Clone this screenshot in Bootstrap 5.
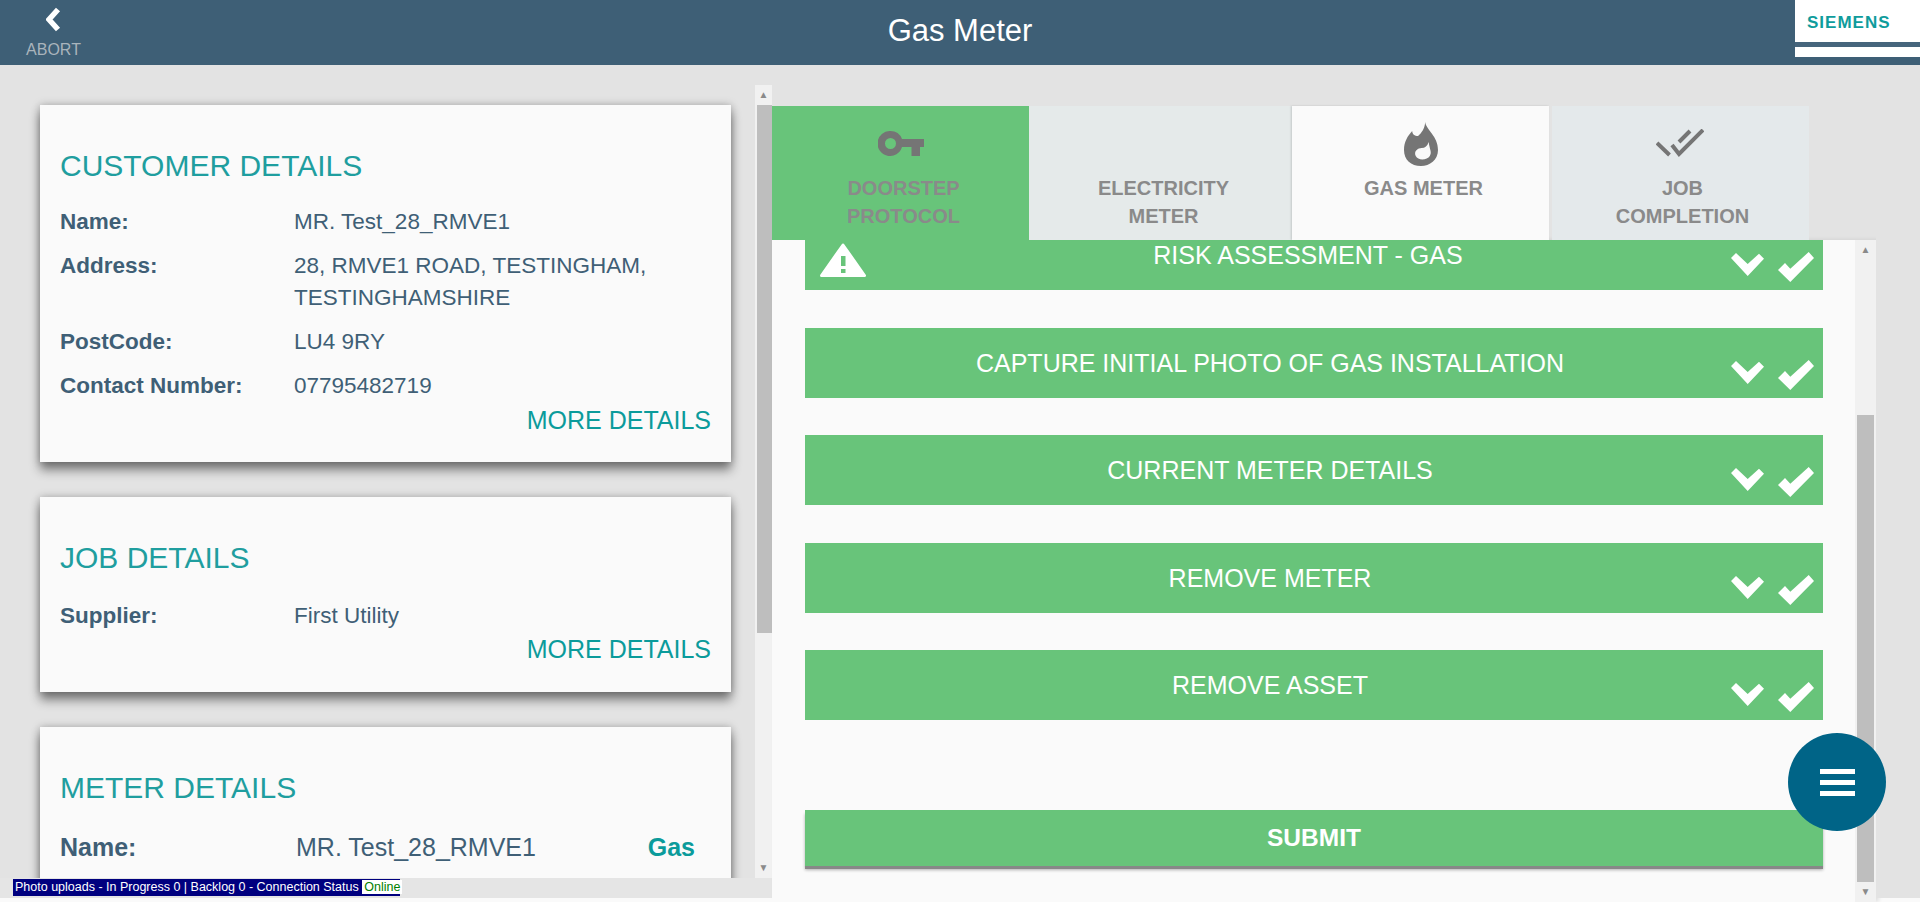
<!DOCTYPE html>
<html lang="en">
<head>
  <meta charset="UTF-8">
  <title>Gas Meter</title>
  <link rel="stylesheet" href="https://cdn.jsdelivr.net/npm/bootstrap@5.3.0/dist/css/bootstrap.min.css">
  <style>
    html, body { height: 902px; overflow: hidden; }
    body { background: #fafafa; font-family: "Liberation Sans", Arial, sans-serif; color: #3f5f76; position: relative; }
    .top-bar { height: 65px; background: #3e5f76; color: #fff; }
    .abort-btn { width: 125px; padding: 7px 18px 0 0; color: #a9b4bc; font-size: 16px; line-height: 18px; }
    .abort-btn span { display: block; margin-top: 9px; }
    .page-title { font-size: 31px; line-height: 62px; }
    .logo-box { width: 125px; height: 57px; background: #fff; }
    .logo-text { height: 42px; padding: 14px 0 0 12px; color: #0f9c9c; font-size: 17px; line-height: 18px; font-weight: 700; letter-spacing: 1px; }
    .logo-band { height: 5px; background: #46657c; }
    .left-col { width: 772px; }
    .left-main { height: 813px; background: #e3e3e3; }
    .cards-wrap { width: 755px; height: 813px; padding: 40px 24px 0 40px; overflow: hidden; }
    .info-card { border-radius: 0; background: #fafafa; box-shadow: 0 8px 10px rgba(0,0,0,.45), 0 0 8px rgba(0,0,0,.25); padding: 0 20px; margin-bottom: 35px; }
    .info-card h4 { color: #1f9e9f; font-size: 30px; line-height: 36px; font-weight: 400; margin: 43px 0 22px; }
    .info-row { display: flex; font-size: 22.5px; line-height: 32px; margin-bottom: 12px; }
    .info-row b { width: 234px; flex: none; }
    .more-link { color: #0b9b9b; font-size: 25px; line-height: 32px; text-align: right; margin-top: -10px; }
    .card-customer { height: 357px; }
    .card-job { height: 195px; }
    .card-job h4 { margin-bottom: 24px; }
    .card-job .more-link { margin-top: -11px; }
    .card-meter { height: 300px; }
    .card-meter .info-row { font-size: 25px; margin-top: 3px; }
    .card-meter .info-row b { width: 236px; }
    .gas-tag { color: #0b9b9b; font-weight: 700; margin-left: auto; margin-right: 16px; }
    .fake-scroll { width: 17px; flex: none; background: #f1f1f1; }
    .left-scroll { margin-top: 20px; height: 793px; }
    .scroll-btn { height: 20px; color: #8a8a8a; font-size: 10px; line-height: 20px; text-align: center; }
    .left-thumb { height: 528px; background: #bebebe; margin-left: 2px; }
    .left-space { height: 225px; }
    .status-strip { height: 20px; background: #e5e5e5; padding: 1px 0 0 13px; }
    .status-box { width: 387px; height: 17px; background: #00007f; color: #fff; font-size: 12.5px; line-height: 17px; padding-left: 2px; white-space: nowrap; }
    .status-box i { font-style: normal; background: #fff; color: #008000; padding: 0 2px; }
    .mid-col { width: 1104px; }
    .tab-row { height: 175px; padding-top: 41px; background: #e3e3e3; }
    .step-tab { width: 258px; height: 134px; padding-left: 6px; text-align: center; color: #8a8a8a; font-size: 20px; line-height: 27.5px; font-weight: 700; flex: none; }
    .step-icon { height: 69px; margin-left: -6px; padding-top: 7px; display: flex; align-items: center; justify-content: center; }
    .tab-green .step-icon, .tab-last .step-icon { padding-top: 5px; }
    .tab-green { background: #68c47a; width: 257px; }
    .tab-plain { background: #e5eaea; width: 263px; }
    .tab-now { background: #fafafa; width: 257px; box-shadow: -1px 0 2px rgba(0,0,0,.15); }
    .tab-last { background: #e4e9eb; margin-left: 3px; width: 257px; padding-left: 4px; }
    .panel-wrap { height: 662px; background: #fafafa; box-shadow: 3px 0 4px rgba(0,0,0,.1); }
    .panel-body { width: 1083px; padding: 0 32px 0 33px; overflow: hidden; }
    .task-list { margin-top: -20px; }
    .task-bar { height: 70px; background: #68c47a; color: #fff; font-size: 25px; margin-bottom: 37.5px; }
    .task-name { text-align: center; padding-top: 2px; }
    .warn-col { width: 76px; flex: none; padding: 20px 0 0 15px; }
    .tick-col { width: 88px; flex: none; padding: 32px 9px 0 0; gap: 14px; }
    .tick-col svg { flex: none; }
    .tick-col .chev-icon { margin-top: 1px; }
    .submit-btn { width: 100%; height: 56px; margin-top: 52px; padding-top: 8px; background: #68c47a; color: #fff; border: 0; border-radius: 0; font-size: 24.5px; font-weight: 700; box-shadow: 0 3px 0 #888, 0 4px 3px rgba(0,0,0,.3); }
    .right-scroll { width: 21px; background: #f1f1f1; color: #444; }
    .right-space { height: 155px; }
    .right-thumb { height: 467px; background: #bebebe; margin: 0 2px; }
    .right-gutter { height: 833px; background: #e3e3e3; }
    .fab-btn { position: absolute; left: 1788px; top: 733px; width: 98px; height: 98px; border-radius: 50%; background: #006487; gap: 6px; }
    .fab-btn span { width: 35px; height: 5px; background: #fff; }
  </style>
</head>
<body>

  <div class="top-bar d-flex">
    <div class="abort-btn text-center">
      <svg width="16" height="25" viewBox="0 0 16 25" class="d-block mx-auto"><polyline points="12,2.500 3,12.500 12,22.500" fill="none" stroke="#fff" stroke-width="5.500"/></svg>
      <span>ABORT</span>
    </div>
    <div class="page-title flex-grow-1 text-center">Gas Meter</div>
    <div class="logo-box">
      <div class="logo-text">SIEMENS</div>
      <div class="logo-band"></div>
    </div>
  </div>

  <div class="d-flex">
    <div class="left-col">
      <div class="left-main d-flex">
        <div class="cards-wrap">
          <div class="card border-0 info-card card-customer">
            <h4>CUSTOMER DETAILS</h4>
            <div class="info-row"><b>Name:</b><span>MR. Test_28_RMVE1</span></div>
            <div class="info-row"><b>Address:</b><span>28, RMVE1 ROAD, TESTINGHAM, TESTINGHAMSHIRE</span></div>
            <div class="info-row"><b>PostCode:</b><span>LU4 9RY</span></div>
            <div class="info-row"><b>Contact Number:</b><span>07795482719</span></div>
            <div class="more-link">MORE DETAILS</div>
          </div>
          <div class="card border-0 info-card card-job">
            <h4>JOB DETAILS</h4>
            <div class="info-row"><b>Supplier:</b><span>First Utility</span></div>
            <div class="more-link">MORE DETAILS</div>
          </div>
          <div class="card border-0 info-card card-meter">
            <h4>METER DETAILS</h4>
            <div class="info-row"><b>Name:</b><span>MR. Test_28_RMVE1</span><span class="gas-tag">Gas</span></div>
          </div>
        </div>
        <div class="fake-scroll left-scroll">
          <div class="scroll-btn">&#9650;</div>
          <div class="left-thumb"></div>
          <div class="left-space"></div>
          <div class="scroll-btn">&#9660;</div>
        </div>
      </div>
      <div class="status-strip">
        <div class="status-box">Photo uploads - In Progress 0 | Backlog 0 - Connection Status <i>Online</i></div>
      </div>
    </div>

    <div class="mid-col">
      <div class="tab-row d-flex">
        <div class="step-tab tab-green">
          <div class="step-icon">
            <svg width="46" height="25" viewBox="0 0 46 25"><path fill="#757575" fill-rule="evenodd" d="M12.5 0A12.5 12.5 0 0 1 24 8H46V16H42V25H33.5V16H24A12.5 12.5 0 1 1 12.5 0ZM12.5 7A5.5 5.5 0 1 0 12.5 18A5.5 5.5 0 1 0 12.5 7Z"/></svg>
          </div>
          DOORSTEP<br>PROTOCOL
        </div>
        <div class="step-tab tab-plain">
          <div class="step-icon"></div>
          ELECTRICITY<br>METER
        </div>
        <div class="step-tab tab-now">
          <div class="step-icon">
            <svg width="34" height="44" viewBox="0 0 29 44" preserveAspectRatio="none"><path fill="#757575" fill-rule="evenodd" d="M18 0C19 8 29 14 29 28C29 38 22 44 14.500 44C6 44 0 38 0 28C0 20 3 14 7 9C7 12 9 14 12 14C15 11 18 6 18 0ZM21 20C20 24 18 26 15 26C12 26 8 29 10 34C12 39 20 38 22 34C24 30 22 28 21 20Z"/></svg>
          </div>
          GAS METER
        </div>
        <div class="step-tab tab-last">
          <div class="step-icon">
            <svg width="48" height="28" viewBox="0 0 48 28" fill="none" stroke="#757575" stroke-width="4"><path d="M1 14L13.500 26M16 16L23 25L47 1M23 13L34 2"/></svg>
          </div>
          JOB<br>COMPLETION
        </div>
      </div>

      <div class="panel-wrap d-flex">
        <div class="panel-body">
          <div class="task-list">
            <div class="task-bar d-flex align-items-center">
              <div class="warn-col align-self-start">
                <svg width="46" height="34" viewBox="0 0 46 34"><polygon fill="#fff" stroke="#fff" stroke-width="3" stroke-linejoin="round" points="23,2 44.500,32.500 1.500,32.500"/><rect x="21" y="13" width="4.500" height="10" fill="#68c47a"/><rect x="21" y="26" width="4.500" height="4" fill="#68c47a"/></svg>
              </div>
              <div class="task-name flex-grow-1">RISK ASSESSMENT - GAS</div>
              <div class="tick-col d-flex align-self-start justify-content-end">
                <svg class="chev-icon" width="33" height="23" viewBox="0 0 33 23"><polygon fill="#fff" points="0,5 5,0 16.700,11 28,.7 33,5.700 16.700,23"/></svg>
                <svg width="36" height="30" viewBox="0 0 36 30"><polygon fill="#fff" points="0,18 7,11 12.300,16.700 30.700,0 36,6 12.300,30"/></svg>
              </div>
            </div>
            <div class="task-bar d-flex align-items-center">
              <div class="task-name flex-grow-1">CAPTURE INITIAL PHOTO OF GAS INSTALLATION</div>
              <div class="tick-col d-flex align-self-start justify-content-end">
                <svg class="chev-icon" width="33" height="23" viewBox="0 0 33 23"><polygon fill="#fff" points="0,5 5,0 16.700,11 28,.7 33,5.700 16.700,23"/></svg>
                <svg width="36" height="30" viewBox="0 0 36 30"><polygon fill="#fff" points="0,18 7,11 12.300,16.700 30.700,0 36,6 12.300,30"/></svg>
              </div>
            </div>
            <div class="task-bar d-flex align-items-center">
              <div class="task-name flex-grow-1">CURRENT METER DETAILS</div>
              <div class="tick-col d-flex align-self-start justify-content-end">
                <svg class="chev-icon" width="33" height="23" viewBox="0 0 33 23"><polygon fill="#fff" points="0,5 5,0 16.700,11 28,.7 33,5.700 16.700,23"/></svg>
                <svg width="36" height="30" viewBox="0 0 36 30"><polygon fill="#fff" points="0,18 7,11 12.300,16.700 30.700,0 36,6 12.300,30"/></svg>
              </div>
            </div>
            <div class="task-bar d-flex align-items-center">
              <div class="task-name flex-grow-1">REMOVE METER</div>
              <div class="tick-col d-flex align-self-start justify-content-end">
                <svg class="chev-icon" width="33" height="23" viewBox="0 0 33 23"><polygon fill="#fff" points="0,5 5,0 16.700,11 28,.7 33,5.700 16.700,23"/></svg>
                <svg width="36" height="30" viewBox="0 0 36 30"><polygon fill="#fff" points="0,18 7,11 12.300,16.700 30.700,0 36,6 12.300,30"/></svg>
              </div>
            </div>
            <div class="task-bar d-flex align-items-center">
              <div class="task-name flex-grow-1">REMOVE ASSET</div>
              <div class="tick-col d-flex align-self-start justify-content-end">
                <svg class="chev-icon" width="33" height="23" viewBox="0 0 33 23"><polygon fill="#fff" points="0,5 5,0 16.700,11 28,.7 33,5.700 16.700,23"/></svg>
                <svg width="36" height="30" viewBox="0 0 36 30"><polygon fill="#fff" points="0,18 7,11 12.300,16.700 30.700,0 36,6 12.300,30"/></svg>
              </div>
            </div>
          </div>
          <button type="button" class="btn submit-btn">SUBMIT</button>
        </div>
        <div class="right-scroll">
          <div class="scroll-btn">&#9650;</div>
          <div class="right-space"></div>
          <div class="right-thumb"></div>
          <div class="scroll-btn">&#9660;</div>
        </div>
      </div>
    </div>

    <div class="right-gutter flex-grow-1"></div>
  </div>

  <div class="fab-btn d-flex flex-column align-items-center justify-content-center">
    <span></span><span></span><span></span>
  </div>

</body>
</html>
